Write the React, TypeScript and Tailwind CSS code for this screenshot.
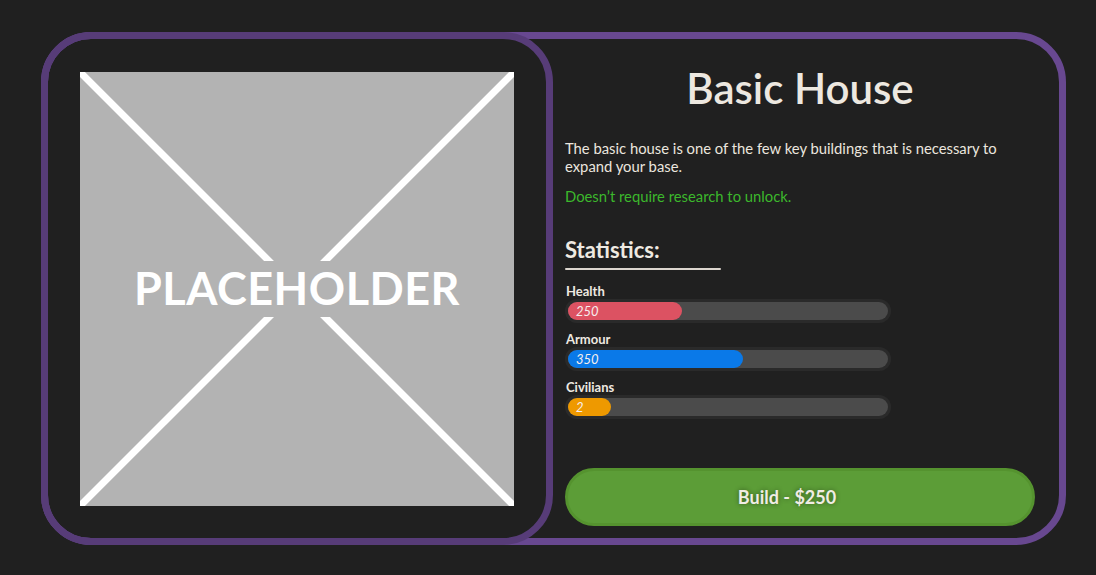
import React from "react";

type Stat = {
  label: string;
  value: number;
  max: number;
  color: string;
};

const stats: Stat[] = [
  { label: "Health", value: 250, max: 700, color: "bg-[#dc5262]" },
  { label: "Armour", value: 350, max: 640, color: "bg-[#0a79e8]" },
  { label: "Civilians", value: 2, max: 15, color: "bg-[#ee9900]" },
];

function Placeholder() {
  return (
    <div className="relative w-[434px] h-[434px] bg-[#b3b3b3] flex items-center justify-center">
      <svg className="absolute inset-0" width="434" height="434" viewBox="0 0 434 434">
        <line x1="0" y1="0" x2="434" y2="434" stroke="#ffffff" strokeWidth="7" />
        <line x1="434" y1="0" x2="0" y2="434" stroke="#ffffff" strokeWidth="7" />
        <rect x="0" y="189" width="434" height="56" fill="#b3b3b3" />
      </svg>
      <span className="relative text-white font-bold text-[45px] leading-none tracking-[0.5px] font-['Lato',sans-serif]">
        PLACEHOLDER
      </span>
    </div>
  );
}

function StatBar({ stat }: { stat: Stat }) {
  const pct = (stat.value / stat.max) * 100;
  return (
    <div className="flex flex-col">
      <span className="text-[13px] leading-4 font-bold text-[#eee9e1] pl-px">{stat.label}</span>
      <div className="w-[326px] h-6 rounded-full bg-[#2a2a2a] p-[3px]">
        <div className="h-[18px] rounded-full bg-[#4b4b4b]">
          <div
            className={`h-[18px] rounded-full ${stat.color} flex items-center pl-2`}
            style={{ width: `${pct}%` }}
          >
            <span className="text-[13px] italic leading-none text-[#f6eeee]">{stat.value}</span>
          </div>
        </div>
      </div>
    </div>
  );
}

export default function App() {
  return (
    <div className="min-h-[575px] bg-[#202020] pl-[41px] pt-[32px] font-['Lato',sans-serif]">
      <div className="flex w-[1025px] h-[513px] rounded-[50px] border-[7px] border-[#684890]">
        <div className="-my-[7px] -ml-[7px] w-[512px] h-[513px] shrink-0 rounded-[50px] border-[7px] border-[#573c78] flex items-center justify-center">
          <Placeholder />
        </div>
        <div className="flex-1 flex flex-col pl-3 pr-6 pt-6 pb-3">
          <h1 className="text-center text-[42px] leading-[50px] font-semibold text-[#ede8e0]">Basic House</h1>
          <p className="mt-[26px] text-[14.8px] leading-[18px] text-[#ebe6df]">
            The basic house is one of the few key buildings that is necessary to expand your base.
          </p>
          <p className="mt-3 text-[14.8px] leading-[18px] text-[#3cb82c]">Doesn’t require research to unlock.</p>
          <h2 className="mt-[31px] text-[22px] leading-7 font-bold text-[#efeae2]">Statistics:</h2>
          <div className="mt-1 w-[156px] h-[2px] rounded-full bg-[#dcd6cf]" />
          <div className="mt-[13px] flex flex-col gap-2">
            {stats.map((s) => (
              <StatBar key={s.label} stat={s} />
            ))}
          </div>
          <button className="mt-auto h-[58px] w-full rounded-full bg-[#5c9d37] border-[3px] border-[#55932f] pr-[26px] text-[18px] font-bold text-[#f0ece4] [text-shadow:0_0_5px_rgba(0,0,0,0.45)]">
            Build - $250
          </button>
        </div>
      </div>
    </div>
  );
}
